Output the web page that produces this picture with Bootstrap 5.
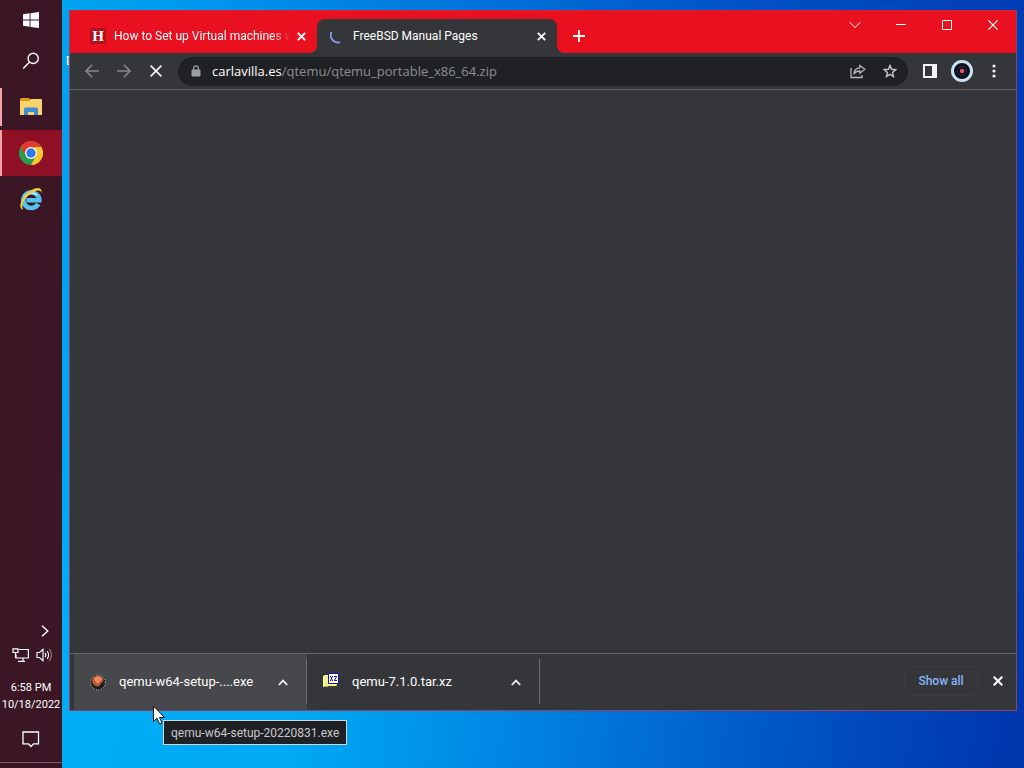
<!DOCTYPE html>
<html lang="en" data-bs-theme="dark">
<head>
<meta charset="utf-8">
<meta name="viewport" content="width=device-width, initial-scale=1">
<title>FreeBSD Manual Pages</title>
<link href="https://cdn.jsdelivr.net/npm/bootstrap@5.3.0/dist/css/bootstrap.min.css" rel="stylesheet">
<style>
  body { font-family: Roboto, "Open Sans", sans-serif; font-size: 12px; line-height: 16px; color: #fff; }
  svg { display: block; flex: none; }
  .icon-btn { display: flex; align-items: center; justify-content: center; padding: 0; border: 0; border-radius: 0; color: inherit; background: none; flex: none; }

  .taskbar { width: 62px; background: #3b1726; }
  .task-btn { height: 46px; width: 100%; border-left: 2px solid transparent; padding-right: 2px; }
  .task-start { height: 38px; padding-top: 2px; }
  .task-open { background: linear-gradient(#f5a3ab, #f5a3ab) 0 / 2px 38px no-repeat; background-origin: border-box; }
  .task-active { background: #8f1024; border-left-color: #f5a3ab; }
  .tray { padding-right: 6px; }
  .tray-btn { width: 24px; height: 24px; }
  .tray-chevron { width: 22px; }
  .clock { font-size: 11px; line-height: 17px; margin: 12px 0 3px; }
  .task-end { height: 6px; border-top: 1px solid #75606b; }

  .desktop { padding: 10px 7px 57px; background: linear-gradient(98deg, #00a4f0 0%, #0098ee 12%, #0074dc 38%, #0054c8 62%, #003fb8 86%, #0037ad 100%); }
  .desktop-lower { left: 0; right: 0; bottom: 0; height: 80%; background: linear-gradient(95deg, #00aef8 0%, #00a9f4 28%, #0084e2 50%, #0060cc 70%, #0047bc 85%, #0036ac 100%); -webkit-mask-image: linear-gradient(transparent, #000 80%); mask-image: linear-gradient(transparent, #000 80%); }
  .desktop-label { left: 4px; top: 53px; }
  .browser { background: #35363a; border: 1px solid #8b4560; border-top-color: #dc2035; }

  .tabstrip { height: 42px; background: #e91120; padding-left: 7px; }
  .tab { width: 240px; height: 34px; padding: 0 7px 0 13px; position: relative; }
  .tab-on { background: #35363a; border-radius: 8px 8px 0 0; }
  .tab-on::before, .tab-on::after { content: ""; position: absolute; bottom: 0; width: 8px; height: 8px; }
  .tab-on::before { right: 100%; background: radial-gradient(circle at 0 0, transparent 8px, #35363a 8px); }
  .tab-on::after { left: 100%; background: radial-gradient(circle at 100% 0, transparent 8px, #35363a 8px); }
  .favicon { width: 16px; height: 16px; background: #b40f1c; font: bold 15px/16px "Liberation Serif", serif; text-align: center; }
  .tab-name { white-space: nowrap; width: 176px; margin-left: 8px; }
  .tab-fade { mask-image: linear-gradient(90deg, #000 90%, transparent); -webkit-mask-image: linear-gradient(90deg, #000 90%, transparent); }
  .tab-btn { width: 18px; height: 18px; }
  .new-tab { width: 28px; height: 34px; margin-left: 8px; }
  .caption-btn { width: 46px; height: 28px; }

  .toolbar { height: 37px; padding: 0 6px; border-bottom: 1px solid #626367; }
  .tool-btn { width: 32px; height: 30px; color: #f1f3f4; }
  .tool-off { color: #85868a; }
  .address { height: 29px; border-radius: 15px; background: #202124; padding: 0 2px 0 12px; margin: 0 6px; font-family: "Open Sans", "Noto Sans", sans-serif; font-size: 13px; }
  .address label { color: #fff; margin-left: 10px; }
  .address input { background: none; border: 0; padding: 0; color: #8b8e92; outline: 0; min-width: 0; }

  .shelf { height: 57px; border-top: 1px solid #66676b; padding-left: 4px; }
  .download { width: 233px; padding: 0 15px 0 16px; position: relative; font-size: 13px; }
  .download::after { content: ""; position: absolute; right: 0; top: 5px; bottom: 6px; width: 1px; background: #6b6c70; }
  .download-hover { background: #47484b; }
  .download a { color: #fff; text-decoration: none; margin-left: 13px; }
  .shelf-end { padding: 0 9px 2px 0; }
  .show-all { width: 74px; height: 30px; border-radius: 4px; color: #8ab4f8; font-weight: 500; border: 1px solid #3b3c40; background: none; padding: 0; margin-right: 11px; }
  .file-tip { left: 101px; top: 720px; height: 25px; padding: 4px 7px; background: #202124; border: 1px solid #d5d6d8; color: #c8c9cb; white-space: nowrap; }
  .pointer { left: 90px; top: 705px; }
</style>
</head>
<body class="d-flex vh-100 overflow-hidden">

<nav class="taskbar d-flex flex-column flex-shrink-0" aria-label="Taskbar">
  <button class="icon-btn task-btn task-start" aria-label="Start">
    <svg width="16" height="16" viewBox="0 0 16 16" fill="#fff"><path d="M0 2.2 6.6 1.3V7.6H0zM7.5 1.2 16 0V7.6H7.5zM0 8.5H6.6V14.8L0 13.8zM7.5 8.5H16V16L7.5 14.9z"/></svg>
  </button>
  <button class="icon-btn task-btn" aria-label="Search">
    <svg width="18" height="18" viewBox="0 0 18 18" fill="none" stroke="#fff" stroke-width="1.4"><circle cx="11.2" cy="6.4" r="5.1"/><path d="M7.6 10.1 1.2 16.6"/></svg>
  </button>
  <button class="icon-btn task-btn task-open" aria-label="File Explorer">
    <svg width="22" height="20" viewBox="0 0 22 20"><path d="M0 2 1 1H9L11 3 9 4H0z" fill="#d99b20"/><path d="M0 4H9L11 2H21Q22 2 22 3V18H0z" fill="#f9d36c"/><path d="M4 18V12Q4 10.500 5.500 10.500H16.500Q18 10.500 18 12V18H14V15H8V18z" fill="#3f8fd2"/><path d="M8 15H14V18H8z" fill="#f9d36c"/></svg>
  </button>
  <button class="icon-btn task-btn task-active" aria-label="Google Chrome">
    <svg width="24" height="24" viewBox="0 0 24 24"><circle cx="12" cy="12" r="12" fill="#2a9b4b"/><path d="M1.600 6A12 12 0 0 1 22.400 6L12 7 7 14.600z" fill="#e33b2e"/><path d="M22.400 6A12 12 0 0 1 12 24L17 15 15 6z" fill="#fbc52d"/><circle cx="12" cy="12" r="6" fill="#fff"/><circle cx="12" cy="12" r="4.700" fill="#2f7bea"/></svg>
  </button>
  <button class="icon-btn task-btn" aria-label="Internet Explorer">
    <svg width="24" height="24" viewBox="0 0 24 24" fill="none"><path d="M19.300 17A8 7.800 0 1 1 20.300 13.300H7.500" stroke="#55c3ee" stroke-width="4.600"/><path d="M6 9.500A7.800 7.500 0 0 1 18 8" stroke="#c5f0fc" stroke-width="1.600"/><path d="M4.500 22.500C-2 22 2 10 11 4 17 0 23.500 -.5 22.500 6 21.500 2.500 17 3 12.500 6 5 11 1 18.500 4.500 22.500z" fill="#f8cb38"/></svg>
  </button>

  <div class="tray mt-auto d-flex justify-content-end">
    <button class="icon-btn tray-btn tray-chevron" aria-label="Show hidden icons"><svg width="8" height="12" viewBox="0 0 8 12" fill="none" stroke="#fff" stroke-width="1.400"><path d="M1 .7 6.800 6 1 11.300"/></svg></button>
  </div>
  <div class="tray d-flex justify-content-end">
    <button class="icon-btn tray-btn" aria-label="Network"><svg width="17" height="14" viewBox="0 0 17 14" fill="none" stroke="#fff" stroke-width="1.200"><path d="M7 1.500H16.400V10H4V6.500M11 10V13M6 13.300H13M1 .8H6V4.500H1zM3.500 4.500V10"/></svg></button>
    <button class="icon-btn tray-btn" aria-label="Volume"><svg width="17" height="14" viewBox="0 0 17 14" fill="none" stroke="#fff" stroke-width="1.100"><path d="M1 4.500H3.500L7 1.300V12.700L3.500 9.500H1zM9 4.800Q10.800 7 9 9.200M11.200 3Q14 7 11.200 11"/><path d="M13.400 1Q17.500 7 13.400 13" stroke="#9b7f8a"/></svg></button>
  </div>
  <time class="clock text-center text-nowrap" datetime="2022-10-18T18:58"><span class="d-block">6:58 PM</span><span class="d-block">10/18/2022</span></time>
  <button class="icon-btn task-btn" aria-label="Notifications"><svg width="18" height="17" viewBox="0 0 18 17" fill="none" stroke="#fff" stroke-width="1.300"><path d="M1 1H16.500V12.800H11.500L9 15.500 6.500 12.800H1z"/></svg></button>
  <div class="task-end"></div>
</nav>

<main class="desktop flex-grow-1 d-flex position-relative">
  <div class="desktop-lower position-absolute"></div>
  <span class="desktop-label position-absolute">D</span>

  <section class="browser flex-grow-1 d-flex flex-column position-relative" aria-label="Browser window">
    <header class="tabstrip d-flex align-items-end">
      <div class="tab d-flex align-items-center">
        <span class="favicon">H</span>
        <span class="tab-name tab-fade">How to Set up Virtual machines w</span>
        <button class="icon-btn tab-btn ms-auto" aria-label="Close tab"><svg width="9" height="9" viewBox="0 0 9 9" stroke="#fff" stroke-width="1.800"><path d="M.8.8 8.200 8.200M8.200.8.8 8.200"/></svg></button>
      </div>
      <div class="tab tab-on d-flex align-items-center">
        <svg width="15" height="16" viewBox="0 0 15 16" fill="none" stroke="#8d9be8" stroke-width="1.800"><path d="M1.500 4C-1 9 3 15.500 10 14.400"/></svg>
        <span class="tab-name">FreeBSD Manual Pages</span>
        <button class="icon-btn tab-btn ms-auto" aria-label="Close tab"><svg width="9" height="9" viewBox="0 0 9 9" stroke="#fff" stroke-width="1.800"><path d="M.8.8 8.200 8.200M8.200.8.8 8.200"/></svg></button>
      </div>
      <button class="icon-btn new-tab" aria-label="New tab"><svg width="12" height="12" viewBox="0 0 12 12" stroke="#fff" stroke-width="1.800"><path d="M6 0V12M0 6H12"/></svg></button>
      <div class="ms-auto d-flex align-self-start">
        <button class="icon-btn caption-btn" aria-label="Search tabs"><svg width="12" height="8" viewBox="0 0 12 8" fill="none" stroke="#fff"><path d="M.7 1 6 6.500 11.300 1"/></svg></button>
        <button class="icon-btn caption-btn" aria-label="Minimize"><svg width="10" height="2" viewBox="0 0 10 2"><path d="M0 0H10V1H0z" fill="#fff"/></svg></button>
        <button class="icon-btn caption-btn" aria-label="Maximize"><svg width="10" height="10" viewBox="0 0 10 10" fill="none" stroke="#fff"><path d="M.5.5H9.500V9.500H.5z"/></svg></button>
        <button class="icon-btn caption-btn" aria-label="Close"><svg width="10" height="10" viewBox="0 0 10 10" stroke="#fff" stroke-width="1.200"><path d="M.3.3 9.700 9.700M9.700.3.3 9.700"/></svg></button>
      </div>
    </header>

    <div class="toolbar d-flex align-items-center">
      <button class="icon-btn tool-btn tool-off" aria-label="Back"><svg width="14" height="14" viewBox="0 0 14 14" fill="none" stroke="currentColor" stroke-width="1.600"><path d="M14 7H1.500M7.200.8 1 7 7.200 13.200"/></svg></button>
      <button class="icon-btn tool-btn tool-off" aria-label="Forward"><svg width="14" height="14" viewBox="0 0 14 14" fill="none" stroke="currentColor" stroke-width="1.600"><path d="M0 7H12.500M6.800.8 13 7 6.800 13.200"/></svg></button>
      <button class="icon-btn tool-btn" aria-label="Stop"><svg width="12" height="12" viewBox="0 0 12 12" stroke="currentColor" stroke-width="1.700"><path d="M.6.6 11.400 11.400M11.400.6.6 11.400"/></svg></button>
      <div class="address flex-grow-1 d-flex align-items-center">
        <svg width="12" height="12" viewBox="0 0 12 12"><path d="M2 5H10V11H2z" fill="#9aa0a6" stroke="#9aa0a6" stroke-linejoin="round"/><path d="M3.700 5V3.200A2.300 2.300 0 0 1 8.300 3.200V5" fill="none" stroke="#9aa0a6" stroke-width="1.300"/></svg>
        <label for="url">carlavilla.es</label><input id="url" class="flex-grow-1" type="text" value="/qtemu/qtemu_portable_x86_64.zip">
        <button class="icon-btn tool-btn" aria-label="Share"><svg width="16" height="15" viewBox="0 0 16 15" fill="none" stroke="#b6b8bb" stroke-width="1.300"><path d="M1 4V13.500H12V11M9.800 1.500 14.800 5.300 9.800 9.200V7C7 7 5 8 3.800 10.300 4 6.500 6.500 4 9.800 3.800z"/></svg></button>
        <button class="icon-btn tool-btn" aria-label="Bookmark"><svg width="14" height="14" viewBox="0 0 14 14" fill="none" stroke="#c4c6c9" stroke-width="1.400"><path d="M7 1.500 8.600 5.300 12.700 5.700 9.600 8.400 10.500 12.500 7 10.300 3.500 12.500 4.400 8.400 1.300 5.700 5.400 5.300z"/></svg></button>
      </div>
      <button class="icon-btn tool-btn" aria-label="Side panel"><svg width="14" height="14" viewBox="0 0 14 14"><path fill="#f1f3f4" fill-rule="evenodd" d="M0 0H14V14H0zM2 2V12H9V2z"/></svg></button>
      <button class="icon-btn tool-btn" aria-label="Profile"><svg width="22" height="22" viewBox="0 0 22 22"><circle cx="11" cy="11" r="9.500" fill="#0c101c" stroke="#c9e3f5" stroke-width="3"/><circle cx="11" cy="11" r="4.500" fill="none" stroke="#28314c"/><circle cx="11" cy="11" r="2.200" fill="#f05262"/></svg></button>
      <button class="icon-btn tool-btn" aria-label="Menu"><svg width="4" height="14" viewBox="0 0 4 14" fill="#f1f3f4"><circle cx="2" cy="2" r="1.600"/><circle cx="2" cy="7" r="1.600"/><circle cx="2" cy="12" r="1.600"/></svg></button>
    </div>

    <div class="flex-grow-1"></div>

    <footer class="shelf d-flex align-items-stretch">
      <div class="download download-hover d-flex align-items-center">
        <svg width="16" height="17" viewBox="0 0 16 17"><circle cx="8" cy="8.500" r="7.400" fill="#241c1c" stroke="#d5d0cc" stroke-dasharray="1 1.500"/><path d="M2 6C3 2 10 0 13 4 15 8 11 8 9 12 6 13 2 11 2 6z" fill="#b75b35"/><path d="M4 4Q9 0 12 5L8 10 5 7z" fill="#ee8a58"/></svg>
        <a href="#">qemu-w64-setup-....exe</a>
        <button class="icon-btn tab-btn ms-auto" aria-label="Download options"><svg width="10" height="7" viewBox="0 0 10 7" fill="none" stroke="#eee" stroke-width="1.800"><path d="M.8 6 5 1.600 9.200 6"/></svg></button>
      </div>
      <div class="download d-flex align-items-center">
        <svg width="16" height="20" viewBox="0 0 16 20"><path d="M0 4H1V3H5V15H0z" fill="#ffffb0"/><path d="M1 4H14V14H1z" fill="#f2f291"/><path d="M1 15H14V13" fill="none" stroke="#4a4a18"/><path d="M5.500 1.500H15.500V11.500H5.500z" fill="#fff" stroke="#1714a0"/><path d="M7.300 4 9.700 9M9.700 4 7.300 9M11 4.500H13.700L11.300 8.500H14" fill="none" stroke="#1714a0"/></svg>
        <a href="#">qemu-7.1.0.tar.xz</a>
        <button class="icon-btn tab-btn ms-auto" aria-label="Download options"><svg width="10" height="7" viewBox="0 0 10 7" fill="none" stroke="#eee" stroke-width="1.800"><path d="M.8 6 5 1.600 9.200 6"/></svg></button>
      </div>
      <div class="shelf-end ms-auto d-flex align-items-center">
        <button class="show-all">Show all</button>
        <button class="icon-btn tab-btn" aria-label="Close downloads"><svg width="10" height="10" viewBox="0 0 10 10" stroke="#fff" stroke-width="2"><path d="M.7.7 9.300 9.300M9.300.7.7 9.300"/></svg></button>
      </div>
    </footer>
  </section>

  <div class="file-tip position-absolute" role="tooltip">qemu-w64-setup-20220831.exe</div>
  <svg class="pointer position-absolute" width="14" height="21" viewBox="0 0 14 21"><path d="M1.500 1V16.500L5 13.300 7.600 19 10 18 7.500 12.500H12.500z" fill="#fff" stroke="#111"/></svg>
</main>

<script src="https://cdn.jsdelivr.net/npm/bootstrap@5.3.0/dist/js/bootstrap.bundle.min.js"></script>
</body>
</html>
